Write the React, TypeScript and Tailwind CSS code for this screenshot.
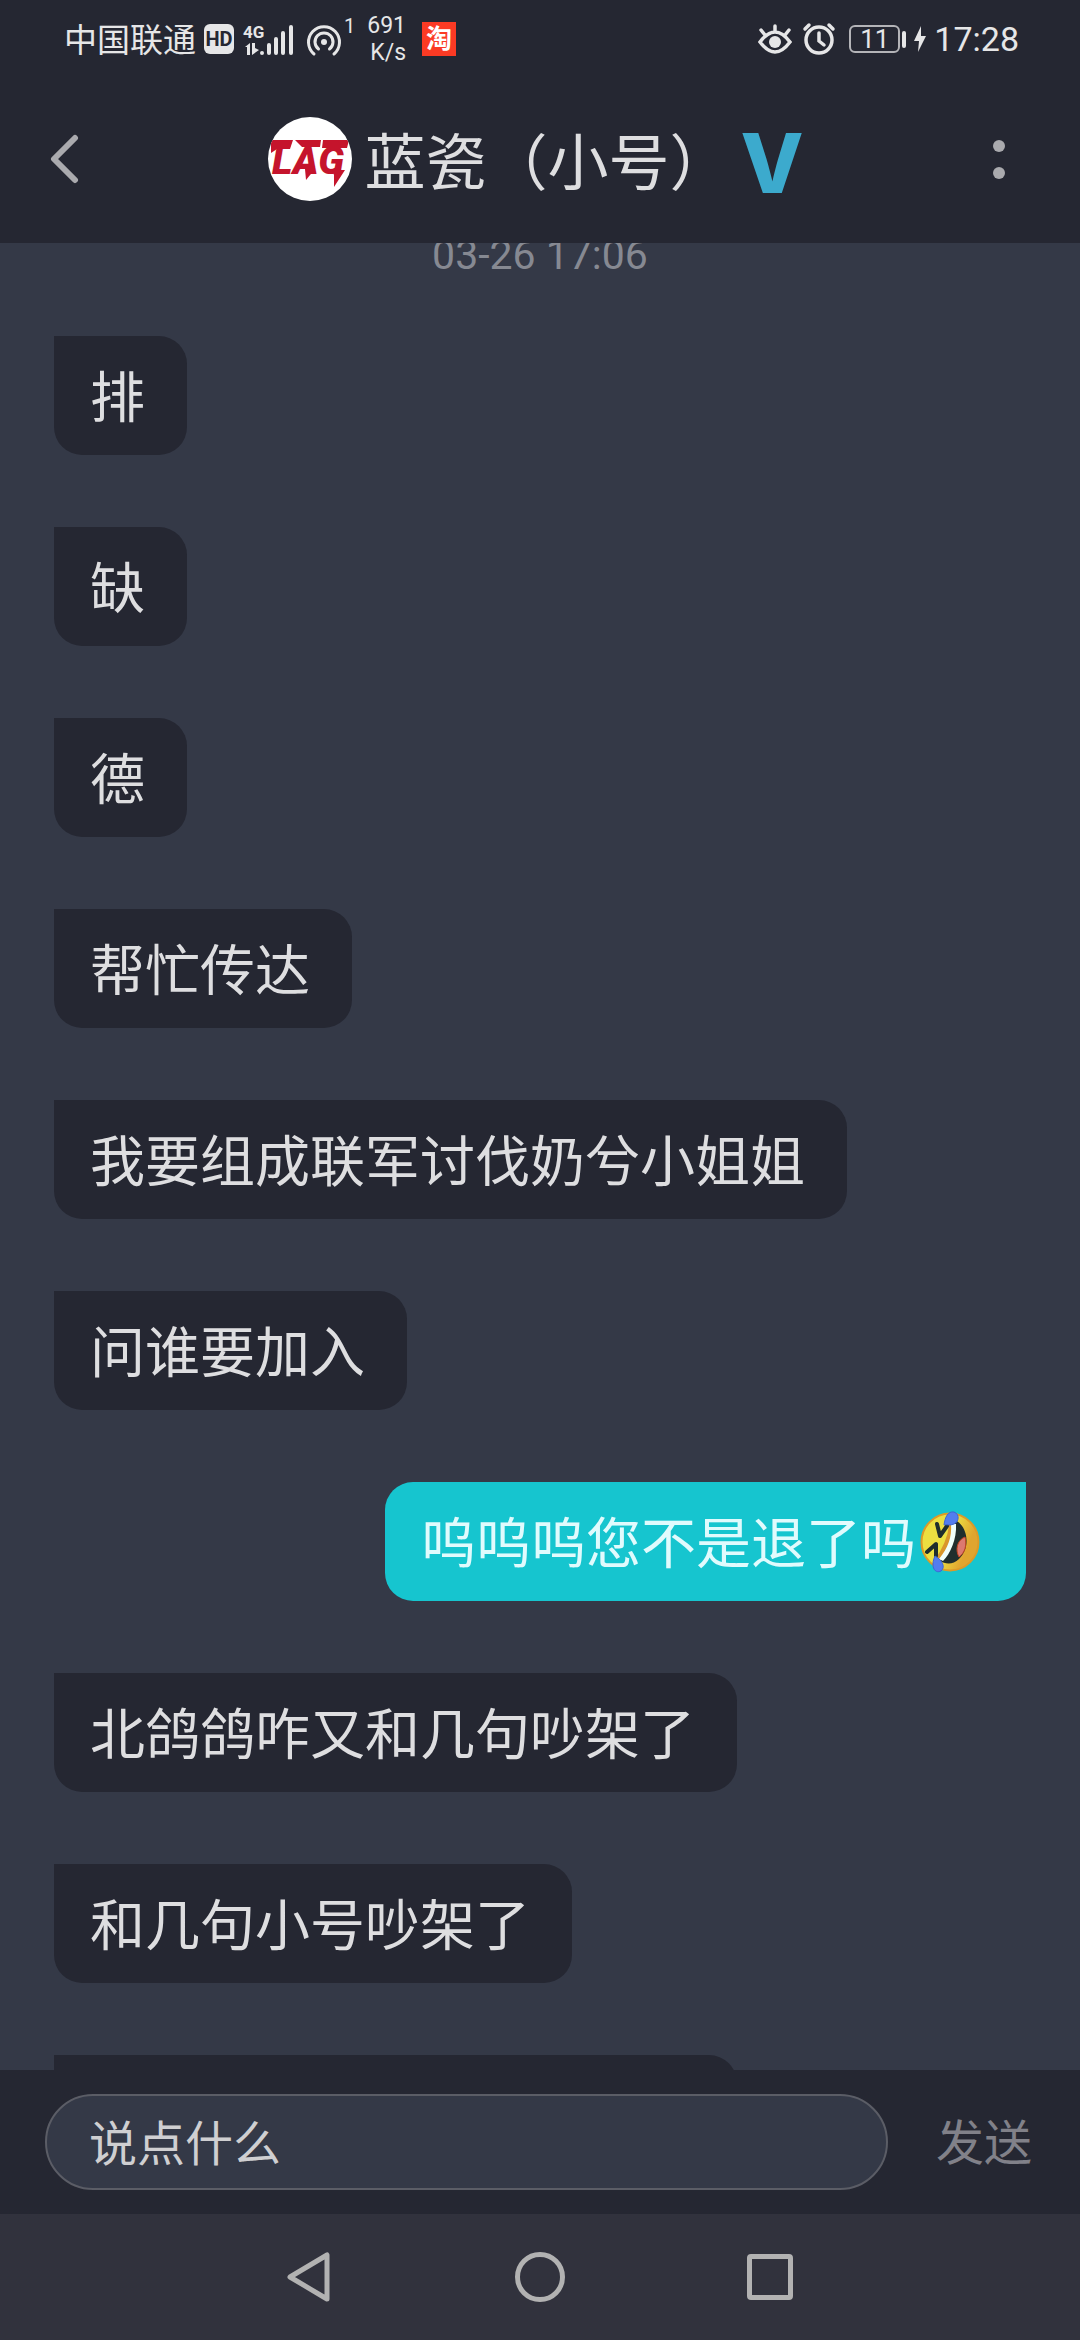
import { useState } from "react";

interface Message {
  id: number;
  text: string;
  mine?: boolean;
  laugh?: boolean;
}

const messages: Message[] = [
  { id: 1, text: "排" },
  { id: 2, text: "缺" },
  { id: 3, text: "德" },
  { id: 4, text: "帮忙传达" },
  { id: 5, text: "我要组成联军讨伐奶兮小姐姐" },
  { id: 6, text: "问谁要加入" },
  { id: 7, text: "呜呜呜您不是退了吗", mine: true, laugh: true },
  { id: 8, text: "北鸽鸽咋又和几句吵架了" },
  { id: 9, text: "和几句小号吵架了" },
];

const LaughIcon = () => (
  <svg className="h-[68px] w-[68px] shrink-0" viewBox="0 0 68 68" role="img" aria-label="笑哭">
    <defs>
      <linearGradient id="face" x1="0" y1="0.3" x2="1" y2="0.7">
        <stop offset="0.45" stopColor="#ecdf41" />
        <stop offset="0.8" stopColor="#e0a52f" />
      </linearGradient>
    </defs>
    <circle cx="34" cy="34" r="28.5" fill="url(#face)" stroke="#dd9a27" strokeWidth="2" />
    <g transform="translate(3 -2)">
      <path d="M33 16 Q31 38 17 56" fill="none" stroke="#d9962a" strokeWidth="5" />
      <path d="M36 14 C49 20 52 42 40 53 C34 59 26 58 21 55 C31 46 36 32 36 14Z" fill="#202e2d" />
      <path d="M46 31 C38 34 36 44 40 51 C46 47 48 39 46 31Z" fill="#dc7970" stroke="#c54420" strokeWidth="1" />
      <path d="M32 18 L37 18 C38 33 31 48 24 55 L20 53 C29 42 33 31 32 18Z" fill="#f0fffb" />
      <path d="M18 18 L21 30 L28 20 M8 46 L17 38 L17 50" fill="none" stroke="#202e2d" strokeWidth="4" strokeLinecap="round" strokeLinejoin="round" />
      <path d="M35 6 C41 8 40 16 35 18 C31 20 27 18 25 19 C26 11 29 5 35 6Z" fill="#537dee" stroke="#3d64d5" strokeWidth="1" />
      <path d="M16 50 C23 54 27 61 22 65 C16 68 11 61 16 50Z" fill="#537dee" stroke="#3d64d5" strokeWidth="1" />
    </g>
  </svg>
);

const StatusBar = () => (
  <div className="flex h-[78px] items-center justify-between pl-16 pr-[61px] text-[#e6e6e7]">
    <div className="flex items-center">
      <span className="pt-1 text-[33px] leading-10">中国联通</span>
      <span className="ml-2 flex h-[30px] w-[30px] items-center justify-center rounded-md bg-[#e6e6e7] text-[20px] font-bold text-[#252732]">
        HD
      </span>
      <svg className="ml-2 h-9 w-[54px]" viewBox="0 0 54 36" fill="currentColor">
        <text x="1" y="17" fontSize="17" fontWeight="700">4G</text>
        <path d="M3 26 l5 -4 v12 h-3 v-8z M10 22 h3 v5 l4 2 -7 5z" />
        <path d="M20 32v0 M27 24v8 M34 18v14 M41 12v20 M49 6v26" stroke="currentColor" strokeWidth="4" strokeLinecap="round" />
      </svg>
      <svg className="ml-2.5 h-9 w-9" viewBox="0 0 36 36" fill="none" stroke="currentColor" strokeWidth="3" strokeLinecap="round">
        <circle cx="18" cy="21" r="3" fill="currentColor" stroke="none" />
        <path d="M12.500 28 a9 9 0 1 1 11 0 M8 33 a15.500 15.500 0 1 1 20 0" />
      </svg>
      <span className="ml-0.5 self-start pt-0.5 text-[20px] leading-6">1</span>
      <span className="ml-3 flex flex-col items-end text-[23px] leading-[27px]">
        <span>691</span>
        <span>K/s</span>
      </span>
      <span className="ml-4 flex h-[34px] w-[34px] items-center justify-center bg-[#fb3a24] text-[26px] font-bold leading-8 text-white">
        淘
      </span>
    </div>
    <div className="flex items-center">
      <svg className="h-9 w-9" viewBox="0 0 36 36" fill="none" stroke="currentColor" strokeWidth="3.500" strokeLinecap="round">
        <path d="M3 21 Q18 1 33 21 Q18 41 3 21Z M18 5v5 M4 9l4 5 M32 9l-4 5" />
        <circle cx="18" cy="21" r="6" fill="currentColor" stroke="none" />
      </svg>
      <svg className="ml-2 h-9 w-9" viewBox="0 0 36 36" fill="none" stroke="currentColor" strokeWidth="3.500" strokeLinecap="round">
        <circle cx="18" cy="19" r="13" />
        <path d="M18 12v8l5 4 M4 8l4 -4 M32 8l-4 -4" />
      </svg>
      <span className="ml-3 flex h-7 w-[51px] items-center justify-center rounded-md border-2 border-[#b4b4b8] text-[26px] leading-7">
        11
      </span>
      <span className="ml-0.5 h-[17px] w-1 rounded-sm bg-[#e6e6e7]" />
      <svg className="ml-2 h-[26px] w-3" viewBox="0 0 12 26" fill="currentColor">
        <path d="M7 0 L0 15 H5 L4 26 L12 10 H7Z" />
      </svg>
      <span className="ml-2 text-[34px] leading-10">17:28</span>
    </div>
  </div>
);

const Avatar = () => (
  <svg className="h-[84px] w-[84px] shrink-0 rounded-full bg-white" viewBox="0 0 84 84" role="img" aria-label="LAG">
    <g fill="#c5142c">
      <text x="4" y="57" fontSize="39" fontWeight="900" fontStyle="italic" fontFamily="Roboto, sans-serif">LAG</text>
      <path d="M3 23 H25 L22 32 H9 L3 36Z" />
      <path d="M27 23 H53 L52 30 H34Z" />
      <path d="M55 23 H81 L79 31 H54Z" />
      <path d="M37 52 H47 L38 63Z" />
      <path d="M64 53 H77 L66 70 L66 58Z" />
    </g>
  </svg>
);

const ChatHeader = () => (
  <div className="flex h-[165px] items-start justify-between pl-9 pr-7 pt-9">
    <button aria-label="返回" className="flex h-[90px] w-[90px] items-center pl-2">
      <svg className="h-[50px] w-[42px]" viewBox="0 0 42 50" fill="none" stroke="#aaaaae" strokeWidth="6" strokeLinecap="round" strokeLinejoin="round">
        <path d="M31 4 L10 25 L31 46" />
      </svg>
    </button>
    <div className="flex h-[90px] items-center">
      <Avatar />
      <h1 className="ml-3 pt-2.5 text-[61px] leading-[80px] text-[#dedee0]">蓝瓷（小号）</h1>
      <span className="ml-2.5 pt-2.5 font-[Inter] text-[82px] font-extrabold leading-[80px] text-[#3caacd]">V</span>
    </div>
    <button aria-label="更多" className="flex h-[90px] w-[106px] flex-col items-center justify-center gap-[15px]">
      <span className="h-3 w-3 rounded-full bg-[#aaaaae]" />
      <span className="h-3 w-3 rounded-full bg-[#aaaaae]" />
    </button>
  </div>
);

const Bubble = ({ message }: { message: Message }) => {
  if (message.mine) {
    return (
      <div className="flex h-[119px] items-center self-end rounded-[28px] rounded-tr-none bg-[#16c5cf] pl-9 pr-[42px] text-[55px] leading-[80px] text-[#e0fbfd]">
        <span className="pt-1">{message.text}</span>
        {message.laugh && <LaughIcon />}
      </div>
    );
  }
  return (
    <div className="flex h-[119px] items-center self-start rounded-[28px] rounded-tl-none bg-[#252732] pl-9 pr-[42px] text-[55px] leading-[80px] text-[#dedee0]">
      <span className="pt-1">{message.text}</span>
    </div>
  );
};

const NavBar = () => (
  <nav className="flex h-[126px] justify-center text-[#b2b2b2]">
    <button aria-label="后退" className="flex w-[230px] items-center justify-center">
      <svg className="h-[50px] w-[50px]" viewBox="0 0 50 50" fill="none" stroke="currentColor" strokeWidth="5" strokeLinejoin="round">
        <path d="M42 3 V47 L5 25Z" />
      </svg>
    </button>
    <button aria-label="主页" className="flex w-[230px] items-center justify-center">
      <span className="h-[50px] w-[50px] rounded-full border-[5px] border-current" />
    </button>
    <button aria-label="最近任务" className="flex w-[230px] items-center justify-center">
      <span className="h-[46px] w-[46px] rounded border-[5px] border-current" />
    </button>
  </nav>
);

const App = () => {
  const [draft, setDraft] = useState("");

  return (
    <div className="flex h-screen flex-col bg-[#31323d] font-[Roboto,'Noto_Sans_CJK_SC',sans-serif]">
      <header className="shrink-0 bg-[#252732]">
        <StatusBar />
        <ChatHeader />
      </header>

      <main className="min-h-0 flex-1 overflow-hidden bg-[#343947] px-[54px]">
        <p className="-mt-3 text-center text-[41px] leading-[48px] text-[#868992]">03-26 17:06</p>
        <div className="mt-[57px] flex flex-col gap-[72px]">
          {messages.map((message) => (
            <Bubble key={message.id} message={message} />
          ))}
          <div className="h-[119px] w-[683px] rounded-[28px] rounded-tl-none bg-[#252732]" />
        </div>
      </main>

      <form
        className="flex h-36 shrink-0 items-center bg-[#252732] pl-[45px] pr-12"
        onSubmit={(e) => e.preventDefault()}
      >
        <input
          type="text"
          aria-label="说点什么"
          placeholder="说点什么"
          value={draft}
          onChange={(e) => setDraft(e.target.value)}
          className="h-24 min-w-0 flex-1 rounded-full border-2 border-[#5b5d66] bg-[#343947] px-[42px] pt-1 text-[48px] text-[#cfcfd1] outline-none placeholder:text-[#cfcfd1]"
        />
        <button className="ml-12 pt-1 text-[48px] leading-[70px] text-[#818189]">发送</button>
      </form>

      <div className="shrink-0">
        <NavBar />
      </div>
    </div>
  );
};

export default App;
